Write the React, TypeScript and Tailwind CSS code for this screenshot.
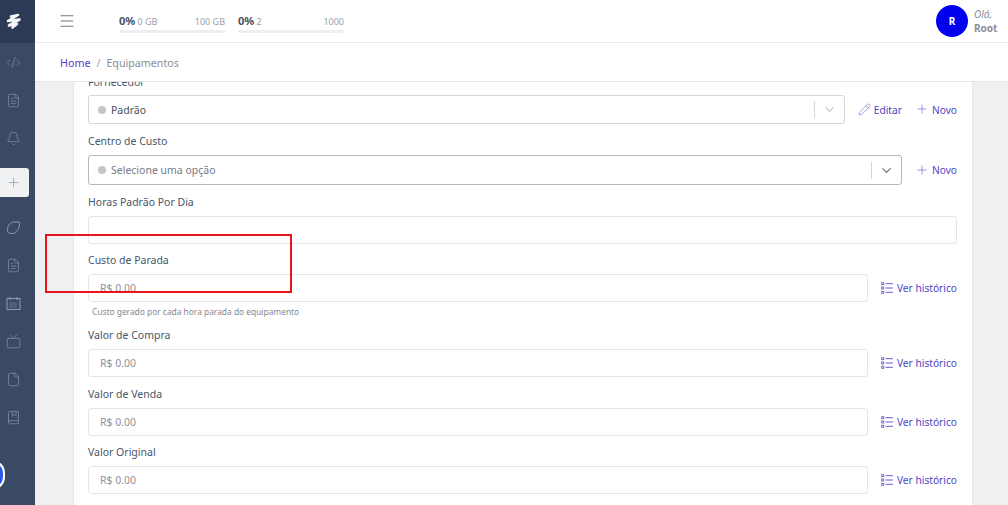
import React from 'react';
import { Bell, BookMarked, ChevronDown, Code2, File, FileText, Menu, Pencil, Plus, Tv } from 'lucide-react';

const font = 'font-["Noto_Sans",sans-serif]';

function LeafIcon({ size, className }: { size: number; className?: string }) {
  return (
    <svg width={size} height={size} viewBox="0 0 15 15" fill="none" stroke="currentColor" strokeWidth="1" className={className}>
      <path d="M1.5 10.5 C1.5 5 4.5 2 8.5 2 L13.5 2 C13.5 2 14 4 13 7 C12 11 9.5 13.5 5.5 13.5 C3 13.5 1.5 12.5 1.5 10.5 Z" />
    </svg>
  );
}

function CalendarWide({ size, className }: { size: number; className?: string }) {
  return (
    <svg width={size} height={size} viewBox="0 0 15 15" fill="none" stroke="currentColor" strokeWidth="1" className={className}>
      <rect x="1" y="2.5" width="13" height="11" />
      <path d="M4 1v3M11 1v3" />
      <path d="M3.5 7h8M3.5 9h8M3.5 11h8" strokeDasharray="1 1" />
    </svg>
  );
}

function CheckList({ size, className }: { size: number; className?: string }) {
  return (
    <svg width={size} height={size} viewBox="0 0 12 12" fill="none" stroke="currentColor" className={className}>
      <rect x="0.7" y="0.7" width="2" height="2" strokeWidth="0.9" />
      <rect x="0.7" y="5" width="2" height="2" strokeWidth="0.9" />
      <rect x="0.7" y="9.3" width="2" height="2" strokeWidth="0.9" />
      <path d="M4.5 1.7H12M4.5 6H12M4.5 10.3H12" strokeWidth="1" />
    </svg>
  );
}

function SideItem({ icon: Icon, className }: { icon: React.ElementType; className: string }) {
  return (
    <div className={`flex w-[26px] justify-center ${className}`}>
      <Icon size={15} strokeWidth={1} className="text-[#8f9bb0]" />
    </div>
  );
}

function Sidebar() {
  return (
    <aside className="relative flex h-full w-[35px] shrink-0 flex-col overflow-hidden bg-[#3a4a65]">
      <div className="flex h-[43px] items-center bg-[#2c3a55] pl-[5px]">
        <svg width="17" height="17" viewBox="0 0 17 17" fill="none" stroke="#f4f5f7" strokeWidth="2.6" strokeLinecap="round" strokeLinejoin="round">
          <path d="M6 3.5 L13 2 L3 8 L14.5 6.5 L4 12.5 L12 11 L7.5 14.5" />
        </svg>
      </div>
      <SideItem icon={Code2} className="mt-[12px]" />
      <SideItem icon={FileText} className="mt-[23px]" />
      <SideItem icon={Bell} className="mt-[23px]" />
      <div className="mt-[22px] flex h-[29px] w-[29px] items-center justify-center rounded-r-[3px] bg-[#f0f1f3] pr-[3px]">
        <Plus size={15} strokeWidth={1} className="text-[#7d8796]" />
      </div>
      <SideItem icon={LeafIcon} className="mt-[23px]" />
      <SideItem icon={FileText} className="mt-[23px]" />
      <SideItem icon={CalendarWide} className="mt-[23px]" />
      <SideItem icon={Tv} className="mt-[23px]" />
      <SideItem icon={File} className="mt-[23px]" />
      <SideItem icon={BookMarked} className="mt-[23px]" />
      <div className="absolute top-[460px] -left-[21px] h-[30px] w-[26px] rounded-full border-2 border-white bg-[#2f55e8]" />
    </aside>
  );
}

function Meter({ pct, low, high }: { pct: string; low: string; high: string }) {
  return (
    <div className="mt-[4px] w-[106px]">
      <div className="flex items-baseline justify-between text-[9px] leading-[14px] text-[#9a9da8]">
        <span>
          <b className="text-[11px] font-bold text-[#4a5266]">{pct}</b> {low}
        </span>
        <span>{high}</span>
      </div>
      <div className="mt-[1px] h-[3px] rounded-full bg-[#eceef2]" />
    </div>
  );
}

function Header() {
  return (
    <header className="flex h-[43px] shrink-0 items-center border-b border-[#e9eaee] bg-white pr-[10px]">
      <Menu size={18} strokeWidth={1.4} className="ml-[23px] mr-[43px] text-[#777]" />
      <div className="flex gap-[13px]">
        <Meter pct="0%" low="0 GB" high="100 GB" />
        <Meter pct="0%" low="2" high="1000" />
      </div>
      <div className="ml-auto flex items-center gap-[6px]">
        <div className="flex h-8 w-8 items-center justify-center rounded-full bg-[#0000ee] text-[10px] font-bold text-white">R</div>
        <div className="w-[24px] text-[10px] leading-[14px] text-[#8b8e99]">
          <div className="italic">Olá,</div>
          <div className="font-bold">Root</div>
        </div>
      </div>
    </header>
  );
}

function Label({ children }: { children: React.ReactNode }) {
  return <div className="h-[15px] text-[10.5px] leading-[17px] text-[#4a5568]">{children}</div>;
}

function LinkAction({ icon: Icon, iconSize = 14, gap = 'gap-[3px]', children }: { icon: React.ElementType; iconSize?: number; gap?: string; children: React.ReactNode }) {
  return (
    <span className={`flex items-center text-[10.2px] whitespace-nowrap text-[#5144c4] ${gap}`}>
      <Icon size={iconSize} strokeWidth={1.1} className="text-[#6a5fd0]" />
      <span className="pt-[2px]">{children}</span>
    </span>
  );
}

function SelectBox({ value, dark }: { value: string; dark?: boolean }) {
  return (
    <div className={`flex h-full flex-1 items-center rounded-[3px] border bg-white pl-[9px] ${dark ? 'border-[#b5b7bb]' : 'border-[#d4d6da]'}`}>
      <span className="h-2 w-2 rounded-full bg-[#c4c5c9]" />
      <span className={`ml-[5px] flex-1 pt-[2px] text-[10.5px] ${dark ? 'text-[#777c85]' : 'text-[#4a4f58]'}`}>{value}</span>
      <span className="h-[17px] w-px bg-[#d5d6d9]" />
      <span className="flex w-[29px] justify-center">
        <ChevronDown size={15} strokeWidth={2} className={dark ? 'text-[#777]' : 'text-[#c7c8cb]'} />
      </span>
    </div>
  );
}

function MoneyField({ label, top, help }: { label: string; top: string; help?: string }) {
  return (
    <div className={top}>
      <Label>{label}</Label>
      <div className="mt-[7px] flex items-center gap-[13px]">
        <div className="flex h-[28px] flex-1 items-center rounded-[3px] border border-[#e3e5e8] bg-white pt-[2px] pl-[11px] text-[10.5px] text-[#8e939b]">
          R$ 0.00
        </div>
        <LinkAction icon={CheckList} iconSize={12} gap="gap-[4px]">Ver histórico</LinkAction>
      </div>
      {help && <div className="mt-[4px] pl-[4px] text-[8.4px] leading-[12px] text-[#85898f]">{help}</div>}
    </div>
  );
}

export default function App() {
  return (
    <div className={`relative flex h-[505px] w-[1008px] overflow-hidden bg-white ${font}`}>
      <Sidebar />
      <div className="flex min-w-0 flex-1 flex-col">
        <Header />
        <nav className="flex h-[39px] shrink-0 items-center gap-[6px] border-b border-[#e3e4e8] bg-white pt-[3px] pl-[25px] text-[10.7px]">
          <span className="text-[#5144c4]">Home</span>
          <span className="text-[#9a9da6]">/</span>
          <span className="text-[#8a8e98]">Equipamentos</span>
        </nav>
        <main className="flex-1 overflow-hidden bg-[#eef0f2] pr-[35px] pl-[38px]">
          <div className="-mt-[8px] h-[440px] border-x border-[#e6e7eb] bg-white pr-[15px] pl-[14px]">
            <Label>Fornecedor</Label>
            <div className="mt-[6px] flex h-[29px] items-center">
              <SelectBox value="Padrão" />
              <span className="ml-[13px]"><LinkAction icon={Pencil} iconSize={13}>Editar</LinkAction></span>
              <span className="ml-[13px]"><LinkAction icon={Plus}>Novo</LinkAction></span>
            </div>
            <div className="mt-[9px]"><Label>Centro de Custo</Label></div>
            <div className="mt-[7px] flex h-[30px] items-center gap-[13px]">
              <SelectBox value="Selecione uma opção" dark />
              <LinkAction icon={Plus}>Novo</LinkAction>
            </div>
            <div className="mt-[9px]"><Label>Horas Padrão Por Dia</Label></div>
            <div className="mt-[7px] h-[28px] rounded-[3px] border border-[#e3e5e8]" />
            <MoneyField label="Custo de Parada" top="mt-[8px]" help="Custo gerado por cada hora parada do equipamento" />
            <MoneyField label="Valor de Compra" top="mt-[9px]" />
            <MoneyField label="Valor de Venda" top="mt-[9px]" />
            <MoneyField label="Valor Original" top="mt-[8px]" />
          </div>
        </main>
      </div>
      <div className="absolute top-[234px] left-[45px] h-[59px] w-[247px] border-2 border-[#e8141c]" />
    </div>
  );
}
